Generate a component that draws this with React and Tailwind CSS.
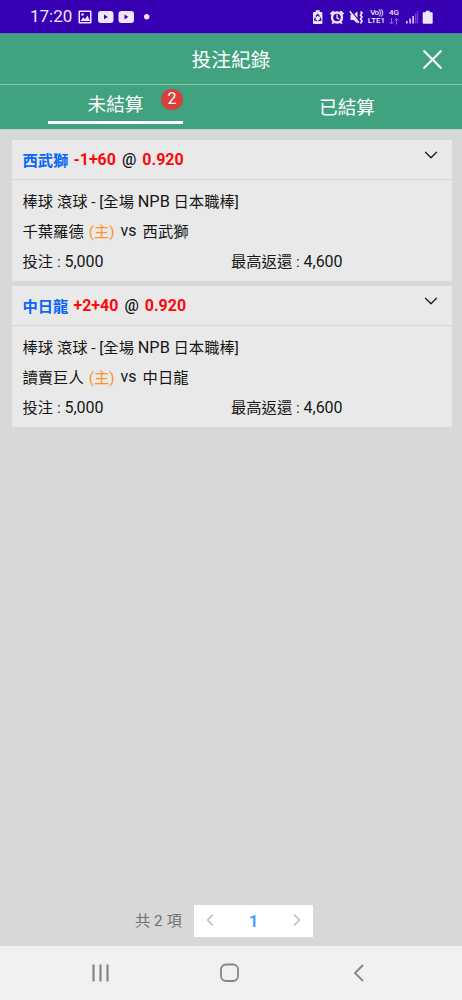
import { X, ChevronDown, ChevronLeft, ChevronRight } from 'lucide-react';

const bets = [
  {
    id: 1,
    pick: '西武獅',
    handicap: '-1+60',
    odds: '0.920',
    home: '千葉羅德',
    away: '西武獅',
    stake: '5,000',
    payout: '4,600',
  },
  {
    id: 2,
    pick: '中日龍',
    handicap: '+2+40',
    odds: '0.920',
    home: '讀賣巨人',
    away: '中日龍',
    stake: '5,000',
    payout: '4,600',
  },
];

function StatusBar() {
  return (
    <div className="h-[34px] shrink-0 bg-[#3700b3] border-b border-[#5280b4] flex items-center text-[#eee6fb]">
      <span className="ml-[30px] w-12 text-[17px] leading-none">17:20</span>

      {/* Notification icons */}
      <svg width="76" height="16" viewBox="0 0 76 16" fill="currentColor">
        <path fillRule="evenodd" d="M1.500 1.500h11a1 1 0 0 1 1 1v11a1 1 0 0 1-1 1h-11a1 1 0 0 1-1-1v-11a1 1 0 0 1 1-1zM2 3v10h10V3z" />
        <path d="M2.500 12 5.300 8.200l1.700 2 2.500-3.700 2.500 5.500z" />
        <circle cx="4.500" cy="5.500" r="1.200" />
        <path fillRule="evenodd" d="M23 2h9.500a3 3 0 0 1 3 3v6a3 3 0 0 1-3 3H23a3 3 0 0 1-3-3V5a3 3 0 0 1 3-3zM26 5.600v4.600l3.900-2.300z" />
        <path fillRule="evenodd" d="M43.500 2H53a3 3 0 0 1 3 3v6a3 3 0 0 1-3 3h-9.500a3 3 0 0 1-3-3V5a3 3 0 0 1 3-3zM46.500 5.600v4.600l3.900-2.300z" />
        <circle cx="68.700" cy="7.800" r="2.700" />
      </svg>

      <div className="ml-auto mr-[28px] flex items-center">
        {/* Battery saver, alarm, mute */}
        <svg width="51" height="16" viewBox="0 0 51 16" fill="none" stroke="currentColor">
          <path d="M3.700 1.300h4v1.600h1.700a1 1 0 0 1 1 1V14a1 1 0 0 1-1 1H2a1 1 0 0 1-1-1V3.900a1 1 0 0 1 1-1h1.700z" fill="currentColor" stroke="none" />
          <path d="m3.900 7.500 1.800-2 1.800 2M8.300 8.500l.5 2.700-2.500.4M5 11.800l-2.400-.9.700-2.400" stroke="#3700b3" strokeWidth="1.200" />
          <circle cx="25" cy="8.500" r="5" strokeWidth="2.400" />
          <path d="M25 5.500v3.300l2.300 1.400" strokeWidth="1.300" />
          <path d="M18.500 5.200l3.200-3M31.500 5.200l-3.200-3M21.500 13l-1.300 1.800M28.500 13l1.300 1.800" strokeWidth="1.900" />
          <path d="M38.500 5.500h3l4-3v12l-4-3.500h-3z" fill="currentColor" stroke="none" />
          <path d="m38.700 1.300 9 11.200" stroke="#3700b3" strokeWidth="1.200" />
          <path d="m37.800 2.300 9.200 11.500" strokeWidth="1.500" />
          <path d="M48.500 2.500l1.500 1.500-1.500 2 1.500 2-1.500 2 1.500 2-1.500 2.500" strokeWidth="1.700" />
        </svg>
        <div className="ml-[3px] w-[21px] text-[8px] font-medium text-center whitespace-nowrap">
          <div className="h-2 leading-[8px] tracking-[-0.6px]">Vo))</div>
          <div className="h-2 leading-[8px]">LTE1</div>
        </div>
        <div className="ml-px w-3 h-4 flex flex-col items-center">
          <span className="text-[8px] leading-[8px] font-medium">4G</span>
          <svg width="10" height="8" viewBox="0 0 10 8" fill="none" stroke="#8a6ad4">
            <path d="M2.500 1v6M.5 5l2 2 2-2M7.500 7.500v-6M5.500 3.500l2-2 2 2" />
          </svg>
        </div>
        <svg className="ml-1.5" width="28" height="16" viewBox="0 0 28 16" fill="currentColor">
          <path d="M0 12h1.700v2.500H0zM3.300 9.500H5v5H3.300z" opacity=".85" />
          <path d="M6.300 7H8v7.500H6.300z" opacity=".85" />
          <path d="M9.100 4.500h1.300v10H9.100zM11.200 2h.9v12.500h-.9z" opacity=".35" />
          <path d="M19.700 1.700h4v1.500h2a1 1 0 0 1 1 1v9.500a1 1 0 0 1-1 1h-8a1 1 0 0 1-1-1V4.200a1 1 0 0 1 1-1h2z" />
        </svg>
      </div>
    </div>
  );
}

function BetCard({ bet }) {
  return (
    <div className="bg-[#e9e9e9] text-[15.3px] text-[#161616] leading-5">
      <div className="h-[39.5px] px-[11px] border-b border-[#d7d7d7] flex font-bold">
        <span className="pt-[10.5px] text-[#0866f8]">{bet.pick}</span>
        <div className="ml-[5px] pt-[9.5px] flex gap-[6px] text-base leading-5 text-[#fb0909]">
          <span>{bet.handicap}</span>
          <span className="font-medium text-[#161616]">@</span>
          <span>{bet.odds}</span>
        </div>
        <ChevronDown className="ml-auto -mr-px mt-[4px]" size={22} strokeWidth={1.3} />
      </div>

      <div className="px-[11px] pt-3 pb-[9px] flex flex-col gap-[10px]">
        <div className="h-5 whitespace-nowrap">
          棒球 滾球 - [全場 <span className="text-[16.3px] leading-5">NPB</span> 日本職棒]
        </div>
        <div className="h-5 flex">
          <span>{bet.home}</span>
          <span className="ml-[5px] text-[#fa9628]">(主)</span>
          <span className="ml-[6px] -mt-px text-base leading-5">vs</span>
          <span className="ml-[6px]">{bet.away}</span>
        </div>
        <div className="h-5 flex">
          <div className="w-[208.5px]">投注 : <span className="text-base leading-5">{bet.stake}</span></div>
          <div>最高返還 : <span className="text-base leading-5">{bet.payout}</span></div>
        </div>
      </div>
    </div>
  );
}

export default function App() {
  return (
    <div className="w-full h-[1000px] flex flex-col bg-[#d8d8d8] font-[Roboto,'Noto_Sans_CJK_TC',sans-serif]">
      <StatusBar />

      {/* Header */}
      <header className="h-[51px] shrink-0 bg-[#41a280] border-b border-[#8bc5af] grid grid-cols-[60px_1fr_60px] items-center text-white">
        <h1 className="col-start-2 pt-1 text-center text-[19.8px]">投注紀錄</h1>
        <button className="justify-self-center">
          <X size={33} strokeWidth={1.6} />
        </button>
      </header>

      {/* Tabs */}
      <nav className="h-11 shrink-0 bg-[#41a280] grid grid-cols-2 text-white text-[18.7px]">
        <button className="relative w-[135px] ml-12 h-[39px] border-b-[3px] border-white leading-9 pt-0.5">
          未結算
          <span className="absolute right-0 top-1 w-[22px] h-[21px] rounded-full bg-[#d93f3b] text-base leading-5 text-center">2</span>
        </button>
        <button className="h-[43px] pt-1 pl-px">已結算</button>
      </nav>

      <main className="flex-1 border-t border-[#c4d1cc] pt-[10px] pl-[11.5px] pr-[10px] flex flex-col">
        <div className="flex flex-col gap-[5.5px]">
          {bets.map((bet) => (
            <BetCard key={bet.id} bet={bet} />
          ))}
        </div>

        {/* Pagination */}
        <div className="mt-auto mb-[9px] ml-[123.5px] flex items-center h-8">
          <span className="w-[59px] text-[15.3px] text-[#707275]">共 2 項</span>
          <div className="w-[119px] h-8 px-[6px] bg-white flex items-center justify-between text-[#b9bcc2]">
            <ChevronLeft className="-mt-[3px]" size={20} strokeWidth={1.8} />
            <span className="pt-px text-base font-bold text-[#409eff]">1</span>
            <ChevronRight className="-mt-[3px]" size={20} strokeWidth={1.8} />
          </div>
        </div>
      </main>

      {/* System navigation */}
      <footer className="h-[54px] shrink-0 bg-[#f1f1f1]">
        <svg width="462" height="54" viewBox="0 0 462 54" fill="none" stroke="#858585" strokeWidth="1.800">
          <path d="M93.500 18.500v17M100.500 18.500v17M107.500 18.500v17" strokeWidth="2.200" />
          <rect x="221" y="18.500" width="17" height="16.500" rx="5" />
          <path d="m363 19-8 8 8 8" />
        </svg>
      </footer>
    </div>
  );
}
